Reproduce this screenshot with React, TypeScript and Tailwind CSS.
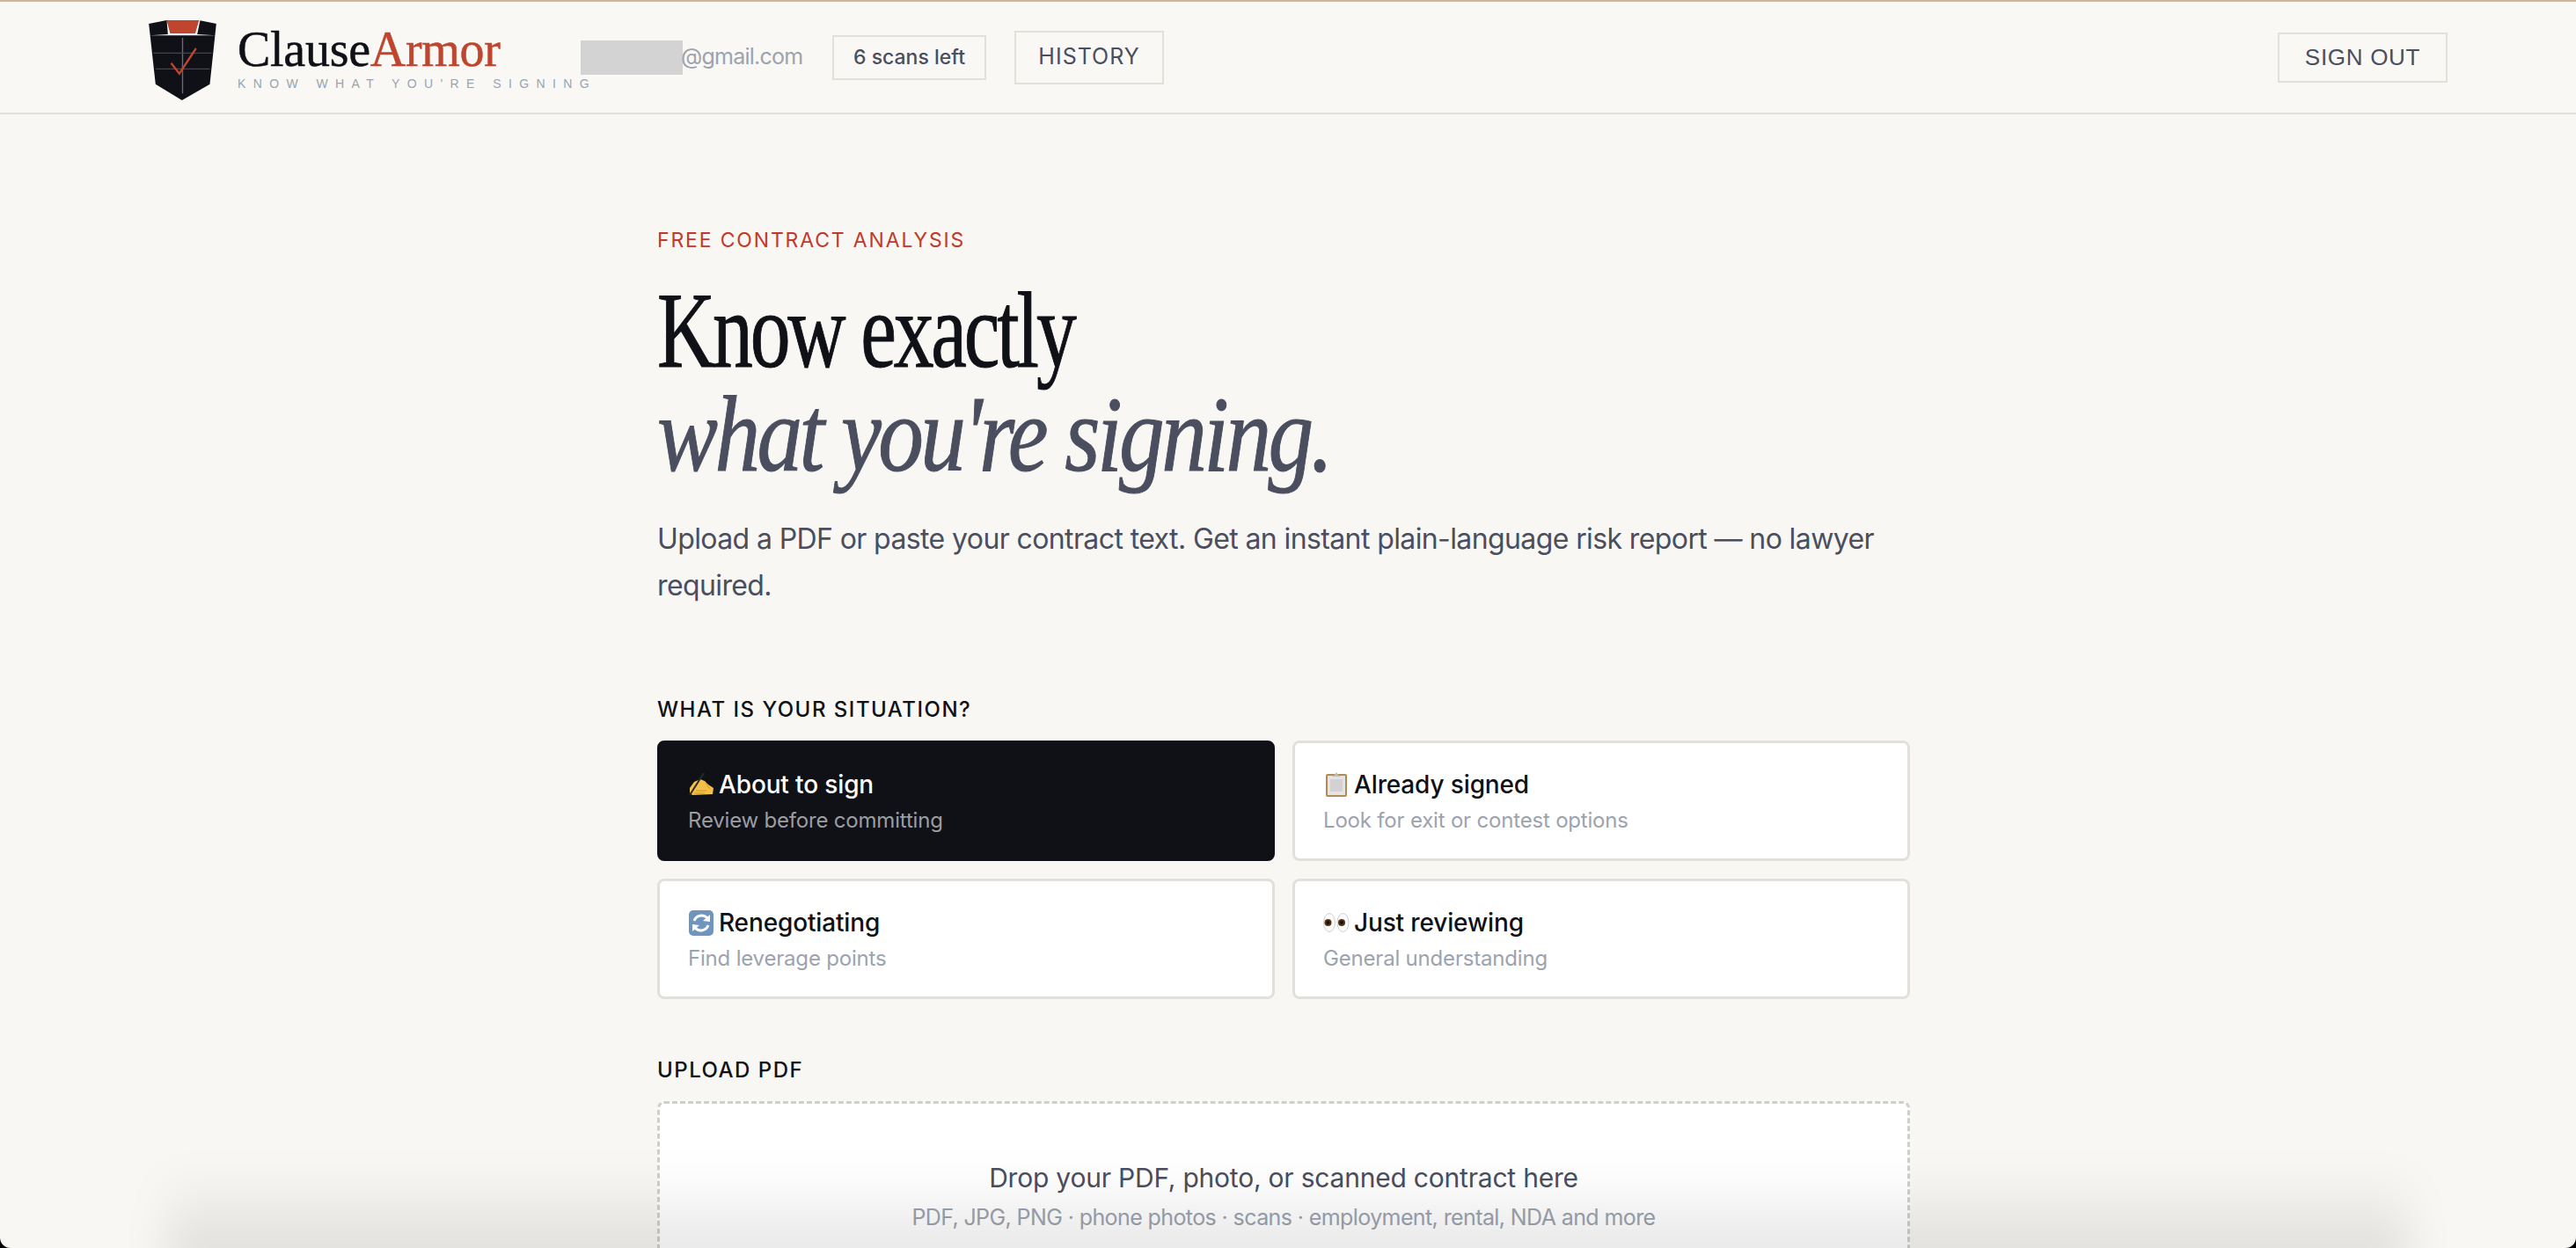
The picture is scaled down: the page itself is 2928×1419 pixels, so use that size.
import React from 'react';

const Logo = () => (
  <svg width="77" height="91" viewBox="57 40 230 273" className="shrink-0 translate-y-[3px]">
    <polygon points="57,52 118,40 228,40 287,52 265,258 170,313 80,258" fill="#0f1117" />
    <polygon points="118,40 228,40 215,85 130,85" fill="#c0452f" />
    <polygon points="118,40 130,85 215,85 228,40 232,40 222,88 285,92 60,92 122,88" fill="#f9f7f3" />
    <line x1="172" y1="100" x2="172" y2="290" stroke="#6b6d73" strokeWidth="4" />
    <line x1="72" y1="152" x2="272" y2="152" stroke="#44464c" strokeWidth="4" />
    <line x1="80" y1="206" x2="265" y2="206" stroke="#44464c" strokeWidth="4" />
    <polyline points="133,186 161,222 218,136" fill="none" stroke="#c0452f" strokeWidth="7" />
  </svg>
);

const HandEmoji = () => (
  <svg width="28" height="26" viewBox="0 0 28 26" className="shrink-0">
    <path d="M1 17 L6 10 L13 7 L18 9 L22 13 L28 17 L27 24 L4 25 L1 22 Z" fill="#f3c148" />
    <path d="M8 20 H20 M6 23 H18 M19 11 L24 18" stroke="#cf9430" strokeWidth="1" fill="none" />
    <line x1="17" y1="0" x2="1" y2="25" stroke="#2a2a2e" strokeWidth="2" />
  </svg>
);

const ClipboardEmoji = () => (
  <svg width="24" height="28" viewBox="0 0 24 28" className="shrink-0">
    <rect x="0" y="2" width="24" height="26" rx="2" fill="#b58a52" />
    <rect x="2" y="4" width="20" height="22" fill="#e4e4e4" />
    <rect x="5" y="8" width="14" height="14" fill="#d2d2d2" />
    <path d="M7 5 L10 3 L12 0 L14 3 L17 5 Z" fill="#bdbdbd" />
  </svg>
);

const SyncEmoji = () => (
  <svg width="28" height="29" viewBox="0 0 28 29" className="shrink-0">
    <rect x="0" y="0" width="28" height="29" rx="5" fill="#6d95bd" />
    <path d="M6 12 A9 9 0 0 1 21 9" fill="none" stroke="#fff" strokeWidth="3" />
    <polygon points="24,5 24,13 16,12" fill="#fff" />
    <path d="M22 17 A9 9 0 0 1 7 20" fill="none" stroke="#fff" strokeWidth="3" />
    <polygon points="4,24 4,16 12,17" fill="#fff" />
  </svg>
);

const EyesEmoji = () => (
  <svg width="30" height="22" viewBox="0 0 30 22" className="shrink-0">
    <ellipse cx="7" cy="11" rx="6.5" ry="10.5" fill="#fbfbfb" stroke="#cfcfcf" />
    <ellipse cx="22.5" cy="11" rx="6.5" ry="10.5" fill="#fbfbfb" stroke="#cfcfcf" />
    <circle cx="5.5" cy="11" r="4" fill="#5a3210" />
    <circle cx="21" cy="11" r="4" fill="#5a3210" />
    <circle cx="5.5" cy="11" r="2" fill="#111" />
    <circle cx="21" cy="11" r="2" fill="#111" />
  </svg>
);

const situations = [
  { title: 'About to sign', desc: 'Review before committing', icon: HandEmoji, active: true },
  { title: 'Already signed', desc: 'Look for exit or contest options', icon: ClipboardEmoji, active: false },
  { title: 'Renegotiating', desc: 'Find leverage points', icon: SyncEmoji, active: false },
  { title: 'Just reviewing', desc: 'General understanding', icon: EyesEmoji, active: false },
];

export default function App() {
  return (
    <div className="h-[1419px] bg-black">
      <div className="relative h-full overflow-hidden rounded-b-[12px] bg-[#f8f7f3] font-['Inter',sans-serif]">
        {/* Header */}
        <header className="flex h-[130px] items-center justify-between border-t-2 border-b-2 border-t-[#cfb596] border-b-[#e2e0da] bg-[#f9f8f4] pl-[169px] pr-[146px]">
          <div className="flex items-center">
            <Logo />
            <div className="ml-[24px] w-[390px] shrink-0">
              <div className="font-['Liberation_Serif',serif] text-[56px] leading-[56px] tracking-[-0.005em] text-[#0f1117] [-webkit-text-stroke:0.5px]">
                Clause<span className="text-[#c0452f]">Armor</span>
              </div>
              <div className="mt-[3px] whitespace-nowrap font-['Liberation_Sans',sans-serif] text-[14px] leading-[16px] tracking-[0.6em] text-[#9ca3af]">
                KNOW WHAT YOU'RE SIGNING
              </div>
            </div>
            <div className="flex items-center">
              <div className="h-[39px] w-[116px] shrink-0 bg-[#d3d3d3]" />
              <span className="-ml-[2px] w-[138px] whitespace-nowrap text-[25px] tracking-[-0.03em] text-[#9ca3af]">@gmail.com</span>
            </div>
            <div className="ml-[34px] flex h-[51px] w-[175px] items-center justify-center border-2 border-[#e2e0da] text-[23px] font-medium text-[#4a4e5e]">
              6 scans left
            </div>
            <button className="ml-[32px] h-[61px] w-[170px] border-2 border-[#e2e0da] text-[25px] tracking-[0.04em] text-[#4a4e5e]">
              HISTORY
            </button>
          </div>
          <button className="h-[57px] w-[193px] border-2 border-[#e2e0da] font-['Liberation_Sans',sans-serif] text-[26px] tracking-[0.027em] text-[#4a4e5e]">
            SIGN OUT
          </button>
        </header>

        <main className="ml-[747px] w-[1424px] pt-[128px]">
          <p className="text-[23px] leading-[30px] tracking-[0.08em] text-[#c0392b]">FREE CONTRACT ANALYSIS</p>

          <h1 className="mt-[29px] whitespace-nowrap font-['Liberation_Serif',serif] text-[122px] font-normal leading-[118px] tracking-[-0.035em] text-[#0f1117] [-webkit-text-stroke:1px_#0f1117]">
            <span className="block origin-left scale-x-[0.752]">Know exactly</span>
            <em className="block origin-left scale-x-[0.848] text-[#4a4e5e] [-webkit-text-stroke:1px_#4a4e5e]">what you're signing.</em>
          </h1>

          <p className="mt-[33px] text-[32px] leading-[53px] tracking-[-0.019em] text-[#4a4e5e]">
            Upload a PDF or paste your contract text. Get an instant plain-language risk report — no lawyer required.
          </p>

          <section className="mt-[100px]">
            <h2 className="text-[24px] font-medium leading-[30px] tracking-[0.0625em] text-[#0f1117]">WHAT IS YOUR SITUATION?</h2>
            <div className="mt-[20px] grid grid-cols-2 gap-x-[20px] gap-y-[20px]">
              {situations.map((s) => {
                const Icon = s.icon;
                return (
                  <div
                    key={s.title}
                    className={
                      s.active
                        ? 'h-[137px] rounded-[8px] border-[3px] border-[#0f1117] bg-[#0f1117] pl-[32px] pt-[28px]'
                        : 'h-[137px] rounded-[8px] border-[3px] border-[#e2e0da] bg-white pl-[32px] pt-[28px]'
                    }
                  >
                    <div className="flex h-[38px] items-center gap-[6px]">
                      <div className="flex w-[29px] justify-center">
                        <Icon />
                      </div>
                      <span className={s.active ? 'text-[28px] font-medium tracking-[-0.005em] text-white' : 'text-[28px] font-medium tracking-[-0.005em] text-[#0f1117]'}>
                        {s.title}
                      </span>
                    </div>
                    <p className={s.active ? 'mt-[6px] text-[24px] leading-[32px] tracking-[-0.008em] text-[#9c9da1]' : 'mt-[6px] text-[24px] leading-[32px] tracking-[-0.008em] text-[#9ca3af]'}>
                      {s.desc}
                    </p>
                  </div>
                );
              })}
            </div>
          </section>

          <section className="mt-[66px]">
            <h2 className="text-[24px] font-medium leading-[30px] tracking-[0.0625em] text-[#0f1117]">UPLOAD PDF</h2>
            <div className="mt-[20px] h-[300px] rounded-[8px] border-[3px] border-dashed border-[#cfcfcb] bg-white pt-[62px] text-center">
              <p className="text-[30px] leading-[44px] tracking-[-0.007em] text-[#4a4e5e]">Drop your PDF, photo, or scanned contract here</p>
              <p className="mt-[3px] text-[25px] leading-[40px] tracking-[-0.024em] text-[#9ca3af]">PDF, JPG, PNG · phone photos · scans · employment, rental, NDA and more</p>
            </div>
          </section>
        </main>

        {/* window shadow along the bottom edge */}
        <div className="pointer-events-none absolute bottom-[-30px] left-[190px] right-[190px] h-[120px] bg-gradient-to-t from-black/12 via-black/6 to-transparent blur-[24px]" />
      </div>
    </div>
  );
}
